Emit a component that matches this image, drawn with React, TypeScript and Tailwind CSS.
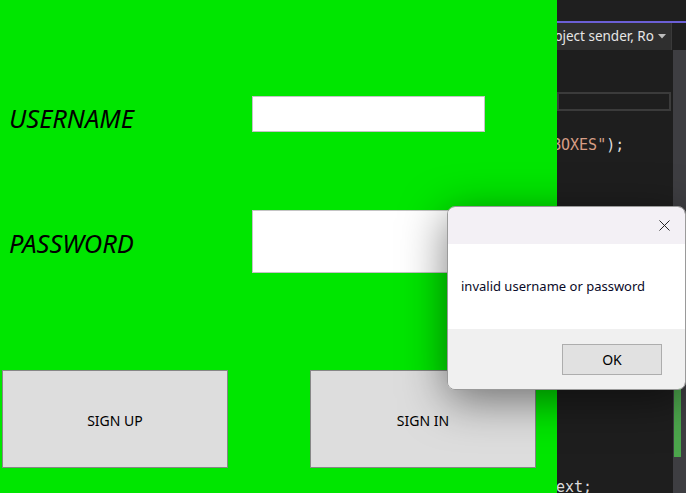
import { X } from 'lucide-react'

const ui = { fontFamily: '"Noto Sans", "Open Sans", sans-serif' }
const mono = { fontFamily: '"DejaVu Sans Mono", "Liberation Mono", monospace' }

const LoginPanel = () => {
  return (
    <div className="w-[557px] shrink-0 h-full bg-[#00e600] flex flex-col" style={ui}>
      {/* USERNAME */}
      <div className="mt-[96px] flex items-center h-[36px]">
        <div className="w-[252px] pl-[9px] pt-[10px] text-[25.5px] italic text-black leading-none">
          USERNAME
        </div>
        <input className="w-[233px] h-[36px] bg-white border border-[#c4c4c4] outline-none" />
      </div>

      {/* PASSWORD */}
      <div className="mt-[78px] flex items-center h-[63px]">
        <div className="w-[252px] pl-[9px] pt-[4px] text-[25.5px] italic text-black leading-none">
          PASSWORD
        </div>
        <input
          type="password"
          className="w-[240px] h-[63px] bg-white border border-[#c4c4c4] outline-none"
        />
      </div>

      {/* BUTTONS */}
      <div className="mt-[97px] flex pl-[2px] gap-[82px]">
        <button className="w-[226px] h-[98px] pt-[3px] bg-[#dddddd] border border-[#868686] text-[14px] text-black">
          SIGN UP
        </button>
        <button className="w-[226px] h-[98px] pt-[3px] bg-[#dddddd] border border-[#868686] text-[14px] text-black">
          SIGN IN
        </button>
      </div>
    </div>
  )
}

const Editor = () => {
  return (
    <div className="flex-1 h-full bg-[#1e1e1e] flex flex-col overflow-hidden">
      <div className="h-[21px] bg-[#1f1f1f]" />
      <div className="h-[2px] bg-[#6b5fd6]" />
      <div className="h-[27px] flex bg-[#1f1f1f]">
        <div
          className="flex-1 bg-[#2f2f2f] border-r border-[#3a3a3a] flex items-center justify-between pr-[5px] overflow-hidden whitespace-nowrap"
          style={ui}
        >
          <span className="text-[13.5px] text-[#e6e6e6] -ml-[11px] w-[108px] overflow-hidden">object sender, Ro</span>
          <svg width="8" height="5" viewBox="0 0 8 5">
            <path d="M0 0h8L4 4.5z" fill="#bdbdbd" />
          </svg>
        </div>
        <div className="w-[14px]" />
      </div>

      <div className="flex-1 flex">
        <div className="flex-1 flex flex-col relative" style={mono}>
          <div className="mt-[42px] h-[19px] mr-[2px] border-2 border-[#3b3b3b]" />
          <div className="mt-[23px] text-[15px] -ml-[5px] whitespace-nowrap">
            <span className="text-[#d69d85]">BOXES"</span>
            <span className="text-[#dcdcdc]">);</span>
          </div>
          <div className="mt-auto mb-[-5px] -ml-[10px] text-[15px] text-[#dcdcdc]">Text;</div>
        </div>
        <div className="w-[13px] bg-[#3e3e42] flex flex-col">
          <div className="mt-[338px] ml-[1px] w-[7px] h-[69px] bg-[#4ca64c]" />
        </div>
      </div>
    </div>
  )
}

const MessageBox = () => {
  return (
    <div
      className="absolute left-[447px] top-[206px] w-[239px] h-[184px] rounded-[8px] overflow-hidden border border-[#9a9a9a] shadow-[0_10px_45px_rgba(0,0,0,0.5)] flex flex-col"
      style={ui}
    >
      <div className="h-[37px] bg-[#f3f0f5] flex items-center justify-end pr-[11px]">
        <X size={19} strokeWidth={1.2} color="#1a1a1a" />
      </div>
      <div className="h-[85px] bg-white flex items-center pl-[13px] pt-[1px]">
        <span className="text-[13px] text-[#0a0a28]">invalid username or password</span>
      </div>
      <div className="flex-1 bg-[#f0f0f0] flex justify-end items-start pt-[15px] pr-[23px]">
        <button className="w-[100px] h-[31px] bg-[#e1e1e1] border border-[#adadad] text-[14px] text-black">
          OK
        </button>
      </div>
    </div>
  )
}

export default function App() {
  return (
    <div className="relative w-[686px] h-[493px] flex overflow-hidden">
      <LoginPanel />
      <Editor />
      <MessageBox />
    </div>
  )
}
